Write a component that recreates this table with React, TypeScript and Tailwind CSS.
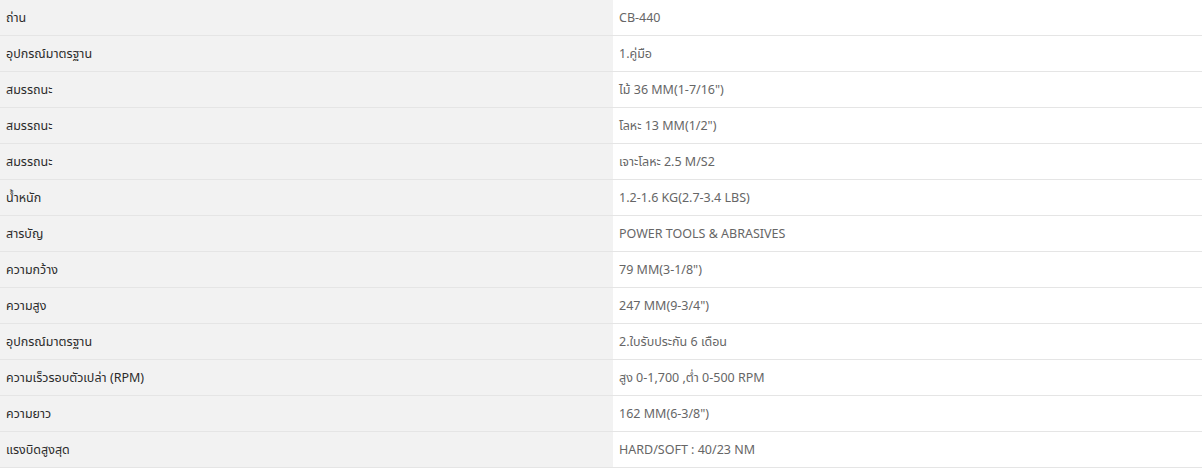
const rows: [string, string][] = [
  ['ถ่าน', 'CB-440'],
  ['อุปกรณ์มาตรฐาน', '1.คู่มือ'],
  ['สมรรถนะ', 'ไม้ 36 MM(1-7/16")'],
  ['สมรรถนะ', 'โลหะ 13 MM(1/2")'],
  ['สมรรถนะ', 'เจาะโลหะ 2.5 M/S2'],
  ['น้ำหนัก', '1.2-1.6 KG(2.7-3.4 LBS)'],
  ['สารบัญ', 'POWER TOOLS & ABRASIVES'],
  ['ความกว้าง', '79 MM(3-1/8")'],
  ['ความสูง', '247 MM(9-3/4")'],
  ['อุปกรณ์มาตรฐาน', '2.ใบรับประกัน 6 เดือน'],
  ['ความเร็วรอบตัวเปล่า (RPM)', 'สูง 0-1,700 ,ต่ำ 0-500 RPM'],
  ['ความยาว', '162 MM(6-3/8")'],
  ['แรงบิดสูงสุด', 'HARD/SOFT : 40/23 NM'],
]

export default function App() {
  return (
    <div className="w-[1202px] bg-white font-['Noto_Sans','Noto_Sans_Thai',Tahoma,sans-serif] text-[12.5px]">
      {rows.map(([label, value], i) => (
        <div key={i} className="flex h-[36px] border-b border-[#e5e5e5]">
          <div className="flex w-[613px] items-center bg-[#f2f2f2] pl-[6px] pt-[2px] text-[#2b2b2b]">{label}</div>
          <div className="flex flex-1 items-center pl-[6px] pt-[2px] text-[#666]">{value}</div>
        </div>
      ))}
    </div>
  )
}
